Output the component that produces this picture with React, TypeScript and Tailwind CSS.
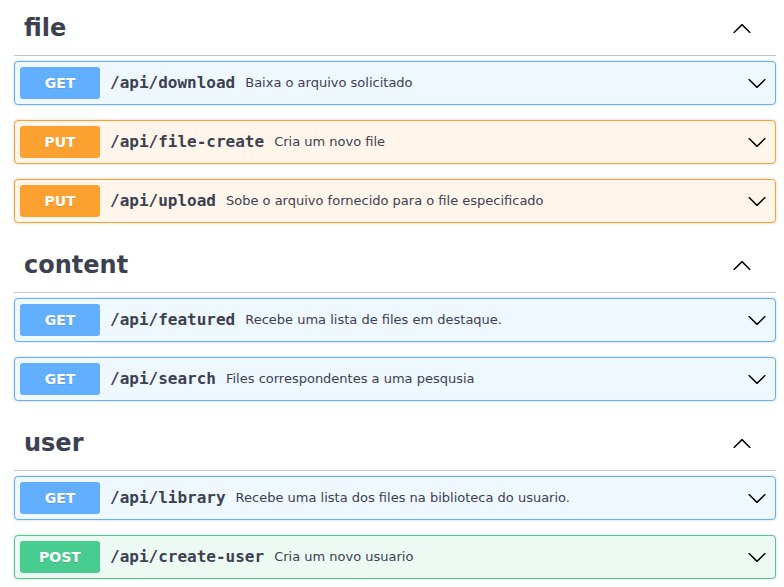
import React from "react";

type Method = "GET" | "PUT" | "POST";

const methodStyles: Record<Method, { block: string; badge: string }> = {
  GET: { block: "border-[#61affe] bg-[#eff7ff]", badge: "bg-[#61affe]" },
  PUT: { block: "border-[#fca130] bg-[#fff5ea]", badge: "bg-[#fca130]" },
  POST: { block: "border-[#49cc90] bg-[#edfaf4]", badge: "bg-[#49cc90]" },
};

const sections: { tag: string; ops: { method: Method; path: string; summary: string }[] }[] = [
  {
    tag: "file",
    ops: [
      { method: "GET", path: "/api/download", summary: "Baixa o arquivo solicitado" },
      { method: "PUT", path: "/api/file-create", summary: "Cria um novo file" },
      { method: "PUT", path: "/api/upload", summary: "Sobe o arquivo fornecido para o file especificado" },
    ],
  },
  {
    tag: "content",
    ops: [
      { method: "GET", path: "/api/featured", summary: "Recebe uma lista de files em destaque." },
      { method: "GET", path: "/api/search", summary: "Files correspondentes a uma pesqusia" },
    ],
  },
  {
    tag: "user",
    ops: [
      { method: "GET", path: "/api/library", summary: "Recebe uma lista dos files na biblioteca do usuario." },
      { method: "POST", path: "/api/create-user", summary: "Cria um novo usuario" },
    ],
  },
];

function ArrowDown() {
  return (
    <svg width="20" height="20" viewBox="0 0 20 20" className="shrink-0">
      <path
        fill="#000"
        d="M17.418 6.109c.272-.268.709-.268.979 0s.271.701 0 .969l-7.908 7.83c-.27.268-.707.268-.979 0l-7.908-7.83c-.27-.268-.27-.701 0-.969.271-.268.709-.268.979 0L10 13.25l7.418-7.141z"
      />
    </svg>
  );
}

function ArrowUp() {
  return (
    <svg width="20" height="20" viewBox="0 0 20 20" className="shrink-0">
      <path
        fill="#000"
        d="M17.418 14.908c.272.268.709.268.979 0s.271-.701 0-.969l-7.908-7.83c-.27-.268-.707-.268-.979 0l-7.908 7.83c-.27.268-.27.701 0 .969.271.268.709.268.979 0L10 7.767l7.418 7.141z"
      />
    </svg>
  );
}

function Operation({ method, path, summary }: { method: Method; path: string; summary: string }) {
  const s = methodStyles[method];
  return (
    <div
      className={`mb-[15px] flex h-[44px] items-center rounded-[4px] border p-[5px] shadow-[0_0_3px_rgba(0,0,0,0.19)] ${s.block}`}
    >
      <span
        className={`flex h-[32px] w-[80px] shrink-0 items-center justify-center rounded-[3px] text-[14px] font-bold text-white [text-shadow:0_1px_0_rgba(0,0,0,0.1)] ${s.badge}`}
      >
        {method}
      </span>
      <span className="px-[10px] font-['DejaVu_Sans_Mono',monospace] text-[16px] font-bold text-[#3b4151]">
        {path}
      </span>
      <span className="flex-1 text-[13px] text-[#3b4151]">{summary}</span>
      <span className="mr-[-1px] pr-[4px]">
        <ArrowDown />
      </span>
    </div>
  );
}

export default function App() {
  return (
    <div className="min-h-[587px] bg-white pt-px font-['DejaVu_Sans',sans-serif]">
      <div className="ml-[14px] w-[762px]">
        {sections.map((sec) => (
          <div key={sec.tag} className="flex flex-col">
            <h3 className="mb-[5px] flex h-[55px] items-center border-b border-[#c4c6cb] pl-[10px] pr-[24px] text-[24px] font-bold text-[#3b4151]">
              <span className="flex-1">{sec.tag}</span>
              <ArrowUp />
            </h3>
            {sec.ops.map((op) => (
              <Operation key={op.path} {...op} />
            ))}
          </div>
        ))}
      </div>
    </div>
  );
}
